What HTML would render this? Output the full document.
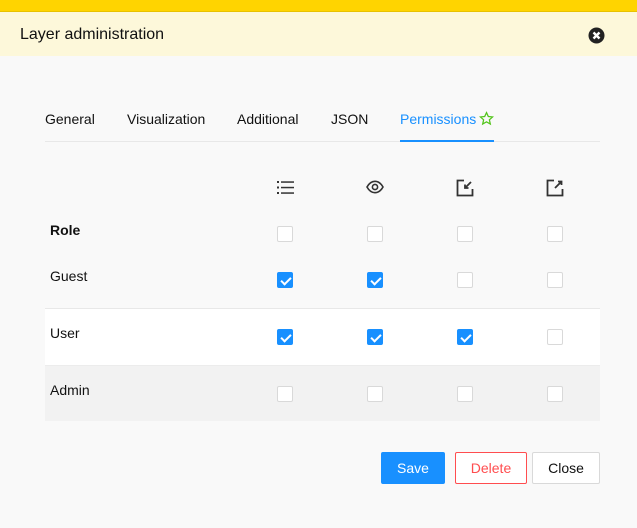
<!DOCTYPE html>
<html><head><style>
*{box-sizing:border-box;margin:0;padding:0}
body{width:637px;height:528px;background:#f9f9f9;font-family:"Liberation Sans",sans-serif;position:relative;overflow:hidden;color:#111}
.a{position:absolute}
.cb{position:absolute;width:16px;height:16px;border:1px solid #d9d9d9;border-radius:2px;background:#fff}
.cb.on{background:#1890ff;border-color:#1890ff}
.cb.on:after{content:"";position:absolute;left:4.5px;top:1.5px;width:4px;height:8px;border:solid #fff;border-width:0 2px 2px 0;transform:rotate(45deg)}
.t{position:absolute;font-size:14px;top:111px}
.btn{position:absolute;top:452px;height:32px;font-size:14px;text-align:center;line-height:30px;border-radius:2px}
</style></head><body>
<div class="a" style="left:0;top:0;width:637px;height:12px;background:#ffd400;border-bottom:1px solid #e8c200"></div>
<div class="a" style="left:0;top:12px;width:637px;height:44px;background:#fdf8da"></div>
<div class="a" style="left:20px;top:26px;font-size:16px">Layer administration</div>
<svg class="a" style="left:588px;top:27px" width="17" height="17" viewBox="0 0 17 17"><circle cx="8.5" cy="8.5" r="8" fill="#222"/><path d="M5.5 5.5L11.5 11.5M11.5 5.5L5.5 11.5" stroke="#fff" stroke-width="2.4"/></svg>
<div class="t" style="left:45px">General</div>
<div class="t" style="left:127px">Visualization</div>
<div class="t" style="left:237px">Additional</div>
<div class="t" style="left:331px">JSON</div>
<div class="t" style="left:400px;color:#1890ff">Permissions</div>
<svg class="a" style="left:479px;top:111px" width="15" height="15" viewBox="0 0 24 24"><path d="M12 2.5l2.9 6.3 6.8.7-5.1 4.6 1.5 6.7L12 17.3 5.9 20.8l1.5-6.7L2.3 9.5l6.8-.7z" fill="none" stroke="#52c41a" stroke-width="2"/></svg>
<div class="a" style="left:45px;top:141px;width:555px;height:1px;background:#e8e8e8"></div>
<div class="a" style="left:400px;top:140px;width:94px;height:2px;background:#1890ff"></div>
<svg class="a" style="left:277px;top:180px" width="17" height="15" viewBox="0 0 17 15"><g fill="#333"><rect x="0" y="1" width="2" height="2"/><rect x="0" y="6.5" width="2" height="2"/><rect x="0" y="12" width="2" height="2"/><rect x="4" y="1.3" width="13" height="1.5"/><rect x="4" y="6.8" width="13" height="1.5"/><rect x="4" y="12.3" width="13" height="1.5"/></g></svg>
<svg class="a" style="left:366px;top:180px" width="18" height="14" viewBox="0 0 18 14"><path d="M1 7C3.5 2.5 6 1.3 9 1.3S14.5 2.5 17 7C14.5 11.5 12 12.7 9 12.7S3.5 11.5 1 7z" fill="none" stroke="#333" stroke-width="1.6"/><circle cx="9" cy="7" r="2.6" fill="none" stroke="#333" stroke-width="1.6"/></svg>
<svg class="a" style="left:456px;top:179px" width="18" height="18" viewBox="0 0 18 18"><path d="M8 1.5H1.5V16.5H16.5V10" fill="none" stroke="#333" stroke-width="1.8"/><path d="M15 3L9.5 8.5M9 5.5V9H12.5" fill="none" stroke="#333" stroke-width="1.8"/></svg>
<svg class="a" style="left:546px;top:179px" width="18" height="18" viewBox="0 0 18 18"><path d="M8 1.5H1.5V16.5H16.5V10" fill="none" stroke="#333" stroke-width="1.8"/><path d="M9 9L15 3M12 2.5H15.5V6" fill="none" stroke="#333" stroke-width="1.8"/></svg>
<div class="a" style="left:50px;top:222px;font-size:14px;font-weight:bold">Role</div>
<div class="a" style="left:50px;top:268px;font-size:14px">Guest</div>
<div class="a" style="left:45px;top:308px;width:555px;height:57px;background:#fff;border-top:1px solid #e8e8e8"></div>
<div class="a" style="left:45px;top:365px;width:555px;height:56px;background:#f2f2f2;border-top:1px solid #ececec"></div>
<div class="a" style="left:50px;top:325px;font-size:14px">User</div>
<div class="a" style="left:50px;top:382px;font-size:14px">Admin</div>
<div class="cb" style="left:277px;top:226px"></div><div class="cb" style="left:367px;top:226px"></div><div class="cb" style="left:457px;top:226px"></div><div class="cb" style="left:547px;top:226px"></div>
<div class="cb on" style="left:277px;top:272px"></div><div class="cb on" style="left:367px;top:272px"></div><div class="cb" style="left:457px;top:272px"></div><div class="cb" style="left:547px;top:272px"></div>
<div class="cb on" style="left:277px;top:329px"></div><div class="cb on" style="left:367px;top:329px"></div><div class="cb on" style="left:457px;top:329px"></div><div class="cb" style="left:547px;top:329px"></div>
<div class="cb" style="left:277px;top:386px"></div><div class="cb" style="left:367px;top:386px"></div><div class="cb" style="left:457px;top:386px"></div><div class="cb" style="left:547px;top:386px"></div>
<div class="btn" style="left:381px;width:64px;background:#1890ff;color:#fff;border:1px solid #1890ff">Save</div>
<div class="btn" style="left:455px;width:72px;background:#fff;color:#ff4d4f;border:1px solid #ff4d4f">Delete</div>
<div class="btn" style="left:532px;width:68px;background:#fff;color:#111;border:1px solid #d9d9d9">Close</div>
</body></html>
